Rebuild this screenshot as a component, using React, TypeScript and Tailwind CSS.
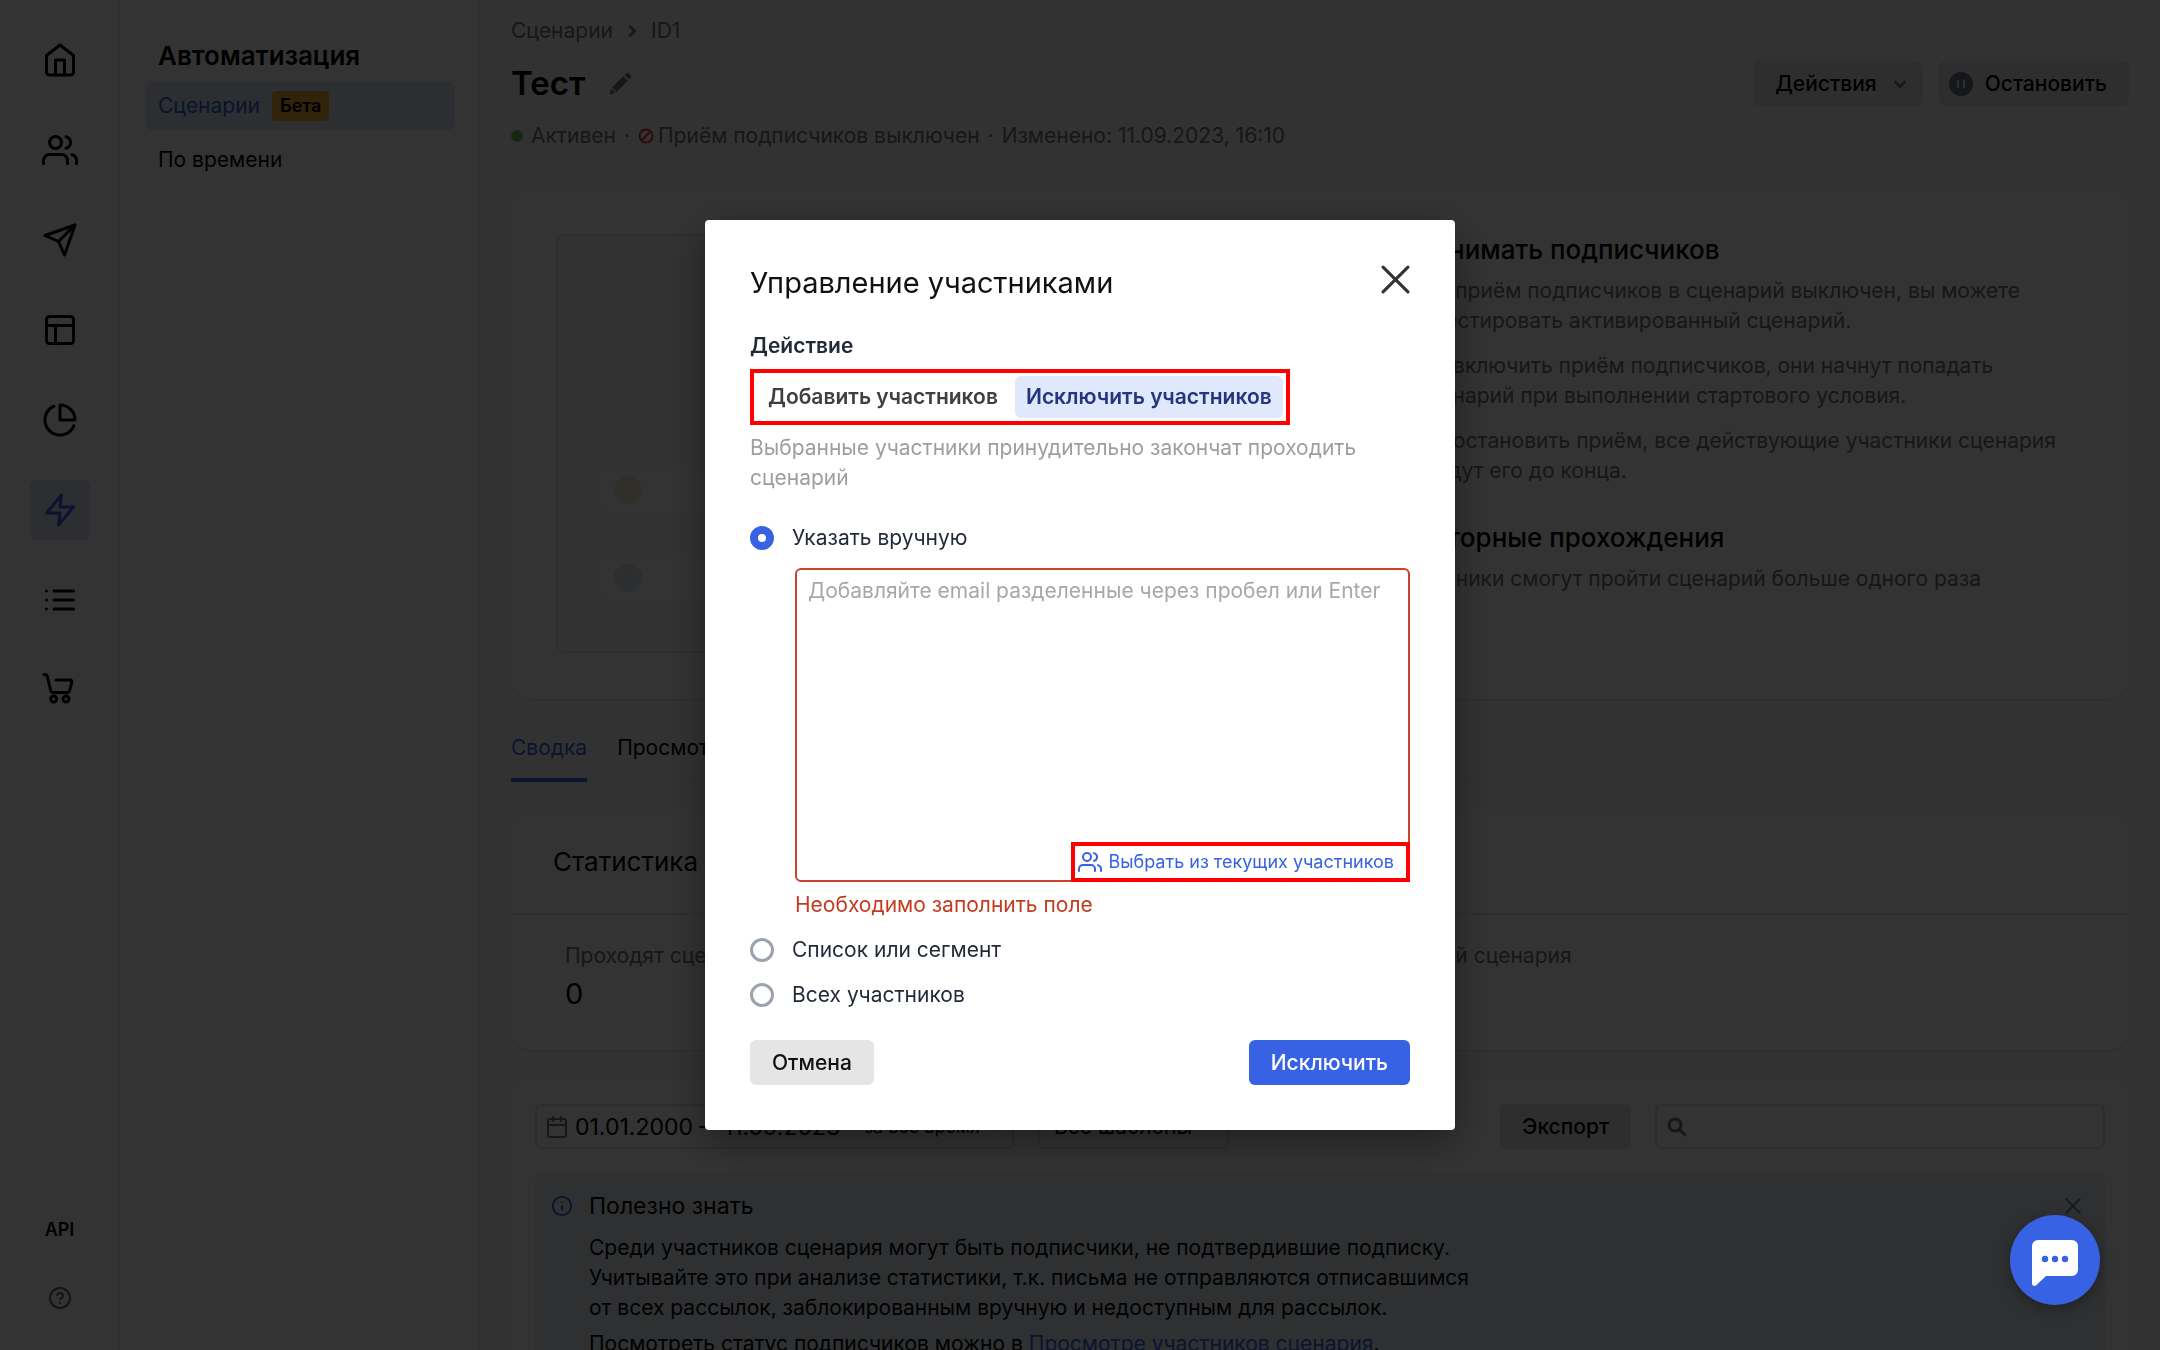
import { useState } from "react";
import type { ComponentType } from "react";
import { FiCalendar, FiHelpCircle, FiHome, FiInfo, FiLayout, FiList, FiPieChart, FiSend, FiUsers, FiZap } from "react-icons/fi";

type IconProps = { className?: string };

function CartIcon({ className }: IconProps) {
  return (
    <svg viewBox="0 0 36 36" fill="none" stroke="currentColor" strokeWidth="3" strokeLinecap="round" strokeLinejoin="round" className={className}>
      <path d="M2 2.500h.8a2.600 2.600 0 0 1 2.500 2L8.800 19a2 2 0 0 0 2 1.500h14.700a2 2 0 0 0 2-1.500L29.800 10a1.600 1.600 0 0 0-1.500-2H14" />
      <circle cx="11.700" cy="27" r="3" />
      <circle cx="24" cy="27" r="3" />
    </svg>
  );
}

function PencilIcon({ className }: IconProps) {
  return (
    <svg viewBox="0 0 22 22" fill="currentColor" className={className}>
      <path d="M15.500 2 17 .8a2.400 2.400 0 0 1 3.400 0l.8.8a2.400 2.400 0 0 1 0 3.400L20 6.500zM14.300 3.200l4.500 4.500L7.500 19 3 14.500zM2.200 15.600 6.400 19.800.5 21.500z" />
    </svg>
  );
}

function BanIcon({ className }: IconProps) {
  return (
    <svg viewBox="0 0 16 16" fill="none" stroke="currentColor" strokeWidth="2" className={className}>
      <circle cx="8" cy="8" r="6.500" />
      <path d="M3.500 12.500l9-9" />
    </svg>
  );
}

function Chevron({ className }: IconProps) {
  return (
    <svg viewBox="0 0 16 16" fill="none" stroke="currentColor" strokeWidth="3" className={className}>
      <path d="M2 5l6 6 6-6" />
    </svg>
  );
}

function PauseIcon({ className }: IconProps) {
  return (
    <svg viewBox="0 0 24 24" className={className}>
      <circle cx="12" cy="12" r="12" fill="currentColor" />
      <path d="M9 8v8M15 8v8" stroke="#e5e5e5" strokeWidth="2" />
    </svg>
  );
}

function SearchIcon({ className }: IconProps) {
  return (
    <svg viewBox="0 0 20 20" fill="none" stroke="currentColor" strokeWidth="3" strokeLinecap="round" className={className}>
      <circle cx="8" cy="8" r="6" />
      <path d="M12.500 12.500l5.500 5.500" />
    </svg>
  );
}

function CloseIcon({ className }: IconProps) {
  return (
    <svg viewBox="0 0 28 28" fill="none" stroke="currentColor" strokeWidth="3" strokeLinecap="round" className={className}>
      <path d="M2 2l24 24M26 2 2 26" />
    </svg>
  );
}

function ChatIcon({ className }: IconProps) {
  return (
    <svg viewBox="0 0 46 46" className={className}>
      <path d="M6 0h34a6 6 0 0 1 6 6v24a6 6 0 0 1-6 6H14L4 45.500c-2 1-4 0-4-2V6a6 6 0 0 1 6-6z" fill="#fff" />
      <g fill="#3762e3">
        <circle cx="13" cy="19" r="3.200" />
        <circle cx="23" cy="19" r="3.200" />
        <circle cx="33" cy="19" r="3.200" />
      </g>
    </svg>
  );
}

const railItems: { label: string; Icon: ComponentType<IconProps>; active?: boolean }[] = [
  { label: "Главная", Icon: FiHome },
  { label: "Контакты", Icon: FiUsers },
  { label: "Рассылки", Icon: FiSend },
  { label: "Шаблоны", Icon: FiLayout },
  { label: "Отчёты", Icon: FiPieChart },
  { label: "Автоматизация", Icon: FiZap, active: true },
  { label: "Списки", Icon: FiList },
  { label: "Магазин", Icon: CartIcon },
];

function Rail() {
  return (
    <nav className="flex w-[120px] shrink-0 flex-col items-center border-r border-[#ebebeb] pt-[30px] pb-9">
      <div className="flex flex-col gap-[30px]">
        {railItems.map(({ label, Icon, active }) => (
          <a
            key={label}
            href="#"
            aria-label={label}
            className={
              active
                ? "flex size-[60px] items-center justify-center rounded-md bg-[#dde3fb] text-[#3762e3]"
                : "flex size-[60px] items-center justify-center rounded-md"
            }
          >
            <Icon className="size-9" />
          </a>
        ))}
      </div>
      <a href="#" className="mt-auto text-[18px] leading-6 font-semibold">API</a>
      <a href="#" aria-label="Помощь" className="mt-11 mb-1 text-[#666]">
        <FiHelpCircle className="size-6" />
      </a>
    </nav>
  );
}

function Sidebar() {
  return (
    <aside className="w-[360px] shrink-0 border-r border-[#ebebeb] pt-9 pr-6 pl-[26px]">
      <h2 className="mb-1.5 pl-3 text-[26px] leading-10 font-semibold">Автоматизация</h2>
      <a href="#" className="flex h-12 items-center gap-3 rounded-md bg-[#dde3fb] pl-3 text-[#3762e3]">
        Сценарии
        <span className="rounded-sm bg-[#f0b030] px-2 text-[18px] leading-[30px] font-semibold text-black">Бета</span>
      </a>
      <a href="#" className="mt-1.5 flex h-12 items-center pl-3">По времени</a>
    </aside>
  );
}

function PageHeader() {
  return (
    <header className="px-[31px] pt-4 text-[#6b7280]">
      <div className="flex items-center gap-3">
        <a href="#">Сценарии</a>
        <Chevron className="size-3.5 -rotate-90" />
        <span>ID1</span>
      </div>
      <div className="mt-[15px] flex items-center">
        <h1 className="text-[33px] leading-[45px] font-semibold text-black">Тест</h1>
        <button type="button" aria-label="Переименовать" className="ml-6">
          <PencilIcon className="size-[22px]" />
        </button>
        <button type="button" className="ml-auto flex h-[45px] items-center rounded-md bg-[#e5e5e5] pr-4 pl-[22px] font-medium text-black">
          Действия
          <Chevron className="ml-4 size-3.5 text-[#6b7280]" />
        </button>
        <button type="button" className="ml-4 flex h-[45px] items-center gap-3 rounded-md bg-[#e5e5e5] pr-[22px] pl-2.5 font-medium text-black">
          <PauseIcon className="size-6 text-[#6b7280]" />
          Остановить
        </button>
      </div>
      <div className="mt-[15px] flex items-center gap-2">
        <span className="size-3 rounded-full bg-[#6cc24a]" />
        <span>Активен</span>
        <span>·</span>
        <span className="flex items-center gap-1">
          <BanIcon className="size-4 text-[#e03131]" />
          Приём подписчиков выключен
        </span>
        <span>·</span>
        <span>Изменено: 11.09.2023, 16:10</span>
      </div>
    </header>
  );
}

function SettingsCard() {
  return (
    <section className="mx-[31px] mt-[38px] flex h-[510px] rounded-[20px] bg-white px-[45px] pt-[45px] pb-[46px] shadow-sm">
      <div className="flex w-[700px] flex-col justify-end gap-[42px] rounded-lg border-2 border-[#e8e8e8] bg-[#fafafa] px-11 pb-[50px]">
        <div className="flex h-[46px] w-[400px] items-center rounded-lg bg-white px-3">
          <span className="size-7 rounded-full bg-[#f2ead0]" />
        </div>
        <div className="flex h-[46px] w-[400px] items-center rounded-lg bg-white px-3">
          <span className="size-7 rounded-full bg-[#dfe5ec]" />
        </div>
      </div>
      <div className="ml-[142px] text-[#6b7280]">
        <h3 className="text-[26px] leading-8 font-medium text-black">Принимать подписчиков</h3>
        <p className="mt-2.5">Пока приём подписчиков в сценарий выключен, вы можете<br />протестировать активированный сценарий.</p>
        <p className="mt-[15px]">Если включить приём подписчиков, они начнут попадать<br />в сценарий при выполнении стартового условия.</p>
        <p className="mt-[15px]">Если остановить приём, все действующие участники сценария<br />пройдут его до конца.</p>
        <h3 className="mt-9 text-[26px] leading-8 font-medium text-black">Повторные прохождения</h3>
        <p className="mt-2.5">Участники смогут пройти сценарий больше одного раза</p>
      </div>
    </section>
  );
}

function Tabs() {
  return (
    <nav className="mt-[34px] flex gap-[30px] border-b-2 border-[#ededed] px-[31px]">
      <a href="#" className="-mb-[3px] border-b-4 border-[#3762e3] pb-[15px] text-[#3762e3]">Сводка</a>
      <a href="#">Просмотр участников</a>
    </nav>
  );
}

function StatsCard() {
  return (
    <section className="mx-[31px] mt-[30px] h-[239px] rounded-[20px] bg-white shadow-sm">
      <h2 className="border-b-2 border-[#ebebeb] px-[42px] pt-8 pb-8 text-[26px] leading-[38px]">Статистика</h2>
      <dl className="flex gap-[556px] px-[54px] pt-[26px]">
        <div>
          <dt className="text-[#6b7280]">Проходят сценарий</dt>
          <dd className="text-[29px] leading-[45px]">0</dd>
        </div>
        <div>
          <dt className="text-[#6b7280]">Прохождений сценария</dt>
          <dd className="text-[29px] leading-[45px]">0</dd>
        </div>
      </dl>
    </section>
  );
}

function ReportCard() {
  return (
    <section className="mx-[31px] mt-[30px] rounded-[20px] bg-white px-6 pt-6 shadow-sm">
      <div className="flex items-center whitespace-nowrap">
        <button type="button" className="flex h-[45px] w-[479px] items-center rounded-md border-2 border-[#e0e0e0] px-2">
          <FiCalendar className="size-6 text-[#6b7280]" />
          <span className="ml-1.5 text-[23px]">01.01.2000 –&nbsp; 11.09.2023</span>
          <span className="ml-6 text-[18px]">за все время</span>
          <Chevron className="ml-3 size-3" />
        </button>
        <button type="button" className="ml-6 flex h-[45px] w-[191px] items-center rounded-md border-2 border-[#e0e0e0] px-3.5">
          Все шаблоны
          <Chevron className="ml-3 size-3" />
        </button>
        <button type="button" className="ml-auto h-[45px] rounded-md bg-[#e5e5e5] px-[22px] font-medium">Экспорт</button>
        <label className="ml-6 flex h-[45px] w-[450px] items-center rounded-md border-2 border-[#dedede] px-2.5">
          <SearchIcon className="size-5 text-[#6b7280]" />
          <input type="search" aria-label="Поиск" className="ml-3 min-w-0 flex-1 outline-none" />
        </label>
      </div>
      <div className="mt-6 flex items-start rounded-md bg-[#ebf0f6] px-4 pt-[18px] pb-10">
        <FiInfo className="mt-1 size-[22px] text-[#3762e3]" />
        <div className="ml-4 flex-1">
          <h3 className="text-[23px] leading-[30px]">Полезно знать</h3>
          <p className="mt-3">
            Среди участников сценария могут быть подписчики, не подтвердившие подписку.<br />
            Учитывайте это при анализе статистики, т.к. письма не отправляются отписавшимся<br />
            от всех рассылок, заблокированным вручную и недоступным для рассылок.
          </p>
          <p className="mt-1.5">
            Посмотреть статус подписчиков можно в <a href="#" className="text-[#3762e3] underline">Просмотре участников сценария</a>.
          </p>
        </div>
        <button type="button" aria-label="Скрыть подсказку" className="mt-[7px] mr-2 text-[#6b7280]">
          <CloseIcon className="size-4" />
        </button>
      </div>
    </section>
  );
}

function RadioOption({ label, checked, onSelect }: { label: string; checked: boolean; onSelect: () => void }) {
  return (
    <label className="flex w-fit items-center gap-[18px] text-[#1f2937]">
      <input
        type="radio"
        name="source"
        checked={checked}
        onChange={onSelect}
        className="size-6 appearance-none rounded-full border-3 border-[#9ca3af] bg-white checked:border-8 checked:border-[#3762e3]"
      />
      {label}
    </label>
  );
}

function MembersDialog() {
  const [source, setSource] = useState("manual");
  return (
    <div role="dialog" aria-modal="true" aria-labelledby="dialog-title" className="w-[750px] rounded-sm bg-white p-[45px] shadow-[0_12px_40px_rgba(0,0,0,0.4)]">
      <div className="flex items-start justify-between">
        <h2 id="dialog-title" className="text-[29px] leading-9 text-[#111]">Управление участниками</h2>
        <button type="button" aria-label="Закрыть" className="text-[#333]">
          <CloseIcon className="size-[29px]" />
        </button>
      </div>
      <h3 className="mt-[30px] font-semibold text-[#1f2937]">Действие</h3>
      <div className="mt-2 flex w-fit gap-1.5 border-4 border-[#ff0000] p-[3px] font-semibold">
        <button type="button" className="h-[42px] rounded-md px-[11px] text-[#404040]">Добавить участников</button>
        <button type="button" aria-pressed="true" className="h-[42px] rounded-md bg-[#dfe9fb] px-[11px] text-[#253681]">Исключить участников</button>
      </div>
      <p className="mt-2 text-[#9e9e9e]">Выбранные участники принудительно закончат проходить сценарий</p>
      <div className="mt-[30px] flex flex-col gap-[15px]">
        <RadioOption label="Указать вручную" checked={source === "manual"} onSelect={() => setSource("manual")} />
        <div className="pl-[45px]">
          <div className="relative">
            <textarea
              aria-label="Email участников"
              placeholder="Добавляйте email разделенные через пробел или Enter"
              className="block h-[314px] w-full resize-none rounded-md border-2 border-[#c9432a] px-[11px] py-1.5 outline-none placeholder:text-[#a8a8a8]"
            />
            <button type="button" className="absolute right-0 bottom-0 flex h-10 items-center gap-1.5 border-4 border-[#ff0000] bg-white pr-3 pl-[3px] text-[18px] text-[#3762e3]">
              <FiUsers className="size-6" />
              Выбрать из текущих участников
            </button>
          </div>
          <p className="mt-2 text-[#c43c20]">Необходимо заполнить поле</p>
        </div>
        <RadioOption label="Список или сегмент" checked={source === "list"} onSelect={() => setSource("list")} />
        <RadioOption label="Всех участников" checked={source === "all"} onSelect={() => setSource("all")} />
      </div>
      <div className="mt-[30px] flex justify-between font-medium">
        <button type="button" className="h-[45px] rounded-md bg-[#e5e5e5] px-[22px] text-[#111]">Отмена</button>
        <button type="button" className="h-[45px] rounded-md bg-[#3762e3] px-[22px] text-white">Исключить</button>
      </div>
    </div>
  );
}

export default function App() {
  return (
    <div className="flex h-screen overflow-hidden bg-white font-[Inter,sans-serif] text-[21px] leading-[30px] text-black">
      <Rail />
      <Sidebar />
      <main className="min-w-0 flex-1 overflow-hidden bg-[#fafafa]">
        <PageHeader />
        <SettingsCard />
        <Tabs />
        <StatsCard />
        <ReportCard />
      </main>
      <div className="fixed inset-0 flex items-center justify-center bg-black/80">
        <MembersDialog />
      </div>
      <button
        type="button"
        aria-label="Чат поддержки"
        className="fixed right-[60px] bottom-[45px] flex size-[90px] items-center justify-center rounded-full bg-[#3762e3] pt-1.5 shadow-[0_4px_16px_rgba(0,0,0,0.3)]"
      >
        <ChatIcon className="size-[46px]" />
      </button>
    </div>
  );
}
